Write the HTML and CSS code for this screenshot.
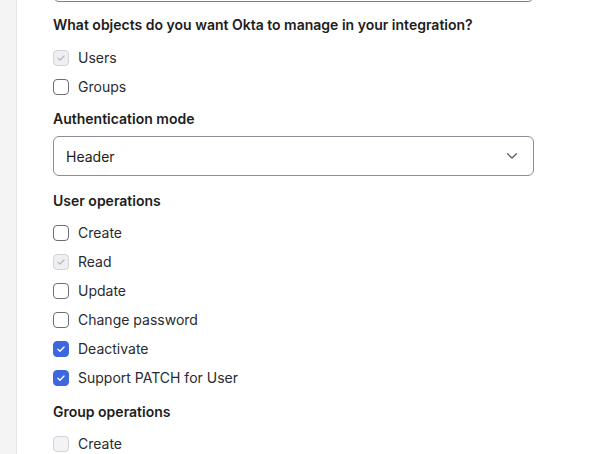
FILE: index.html
```html
<!DOCTYPE html>
<html>
<head>
<meta charset="utf-8">
<link rel="stylesheet" href="styles.css">
</head>
<body>
<div class="page">
  <aside class="side"></aside>
  <main class="content">
    <div class="prev-input"></div>

    <section class="section section-first">
      <h3 class="heading">What objects do you want Okta to manage in your integration?</h3>
      <label class="row"><span class="box box-disabled-checked"><svg viewBox="0 0 16 16"><path d="M4.5 8.2l2.3 2.3 4.7-4.8"/></svg></span>Users</label>
      <label class="row"><span class="box"></span>Groups</label>
    </section>

    <section class="section section-select">
      <h3 class="heading">Authentication mode</h3>
      <div class="select">
        <span>Header</span>
        <svg class="chevron" viewBox="0 0 12 8"><path d="M1.5 1.8l4.5 4.2 4.5-4.2"/></svg>
      </div>
    </section>

    <section class="section">
      <h3 class="heading">User operations</h3>
      <label class="row"><span class="box"></span>Create</label>
      <label class="row"><span class="box box-disabled-checked"><svg viewBox="0 0 16 16"><path d="M4.5 8.2l2.3 2.3 4.7-4.8"/></svg></span>Read</label>
      <label class="row"><span class="box"></span>Update</label>
      <label class="row"><span class="box"></span>Change password</label>
      <label class="row"><span class="box box-checked"><svg viewBox="0 0 16 16"><path d="M4.5 8.2l2.3 2.3 4.7-4.8"/></svg></span>Deactivate</label>
      <label class="row"><span class="box box-checked"><svg viewBox="0 0 16 16"><path d="M4.5 8.2l2.3 2.3 4.7-4.8"/></svg></span>Support PATCH for User</label>
    </section>

    <section class="section section-last">
      <h3 class="heading">Group operations</h3>
      <label class="row"><span class="box box-disabled"></span>Create</label>
    </section>
  </main>
</div>
</body>
</html>
```

FILE: styles.css
```css
* { box-sizing: border-box; }
html, body { margin: 0; padding: 0; background: #ffffff; }
body {
  font-family: Inter, "Noto Sans", sans-serif;
  color: #1d1d21;
  width: 592px;
  height: 454px;
  overflow: hidden;
}
.page {
  display: flex;
  height: 454px;
}
.side {
  width: 17px;
  flex: none;
  background: #f4f4f4;
  border-right: 1px solid #e6e6e6;
}
.content {
  flex: none;
  width: 517px;
  padding-left: 36px;
  display: flex;
  flex-direction: column;
}
.prev-input {
  flex: none;
  height: 12px;
  margin-top: -10px;
  border: 1px solid #7e7e88;
  border-radius: 6px;
}
.section {
  display: flex;
  flex-direction: column;
  margin-top: 8px;
}
.section-first { margin-top: 13px; }
.section-first .heading { margin-bottom: 8px; }
.section-last { margin-top: 10px; }
.heading {
  margin: 0 0 7px 0;
  font-size: 14px;
  line-height: 20px;
  font-weight: 600;
  color: #1d1d21;
}
.row {
  display: flex;
  align-items: center;
  gap: 9px;
  height: 29px;
  font-size: 14px;
  line-height: 20px;
  color: #2a2b30;
}
.box {
  width: 16px;
  height: 16px;
  flex: none;
  border: 1px solid #6e6e78;
  border-radius: 4px;
  background: #ffffff;
  display: flex;
  align-items: center;
  justify-content: center;
}
.box svg { width: 16px; height: 16px; fill: none; stroke-width: 1.3; stroke-linecap: round; stroke-linejoin: round; }
.box-disabled-checked {
  background: #efeff1;
  border-color: #d2d2d8;
}
.box-disabled-checked svg { stroke: #b4b4bc; }
.box-disabled {
  background: #f3f3f5;
  border-color: #d2d2d8;
}
.box-checked {
  background: #3d68dd;
  border-color: #3d68dd;
}
.box-checked svg { stroke: #ffffff; stroke-width: 1.5; }
.section-select .heading { margin-bottom: 7px; }
.section-select { margin-bottom: 7px; }
.select {
  height: 40px;
  border: 1px solid #8c8c96;
  border-radius: 6px;
  display: flex;
  align-items: center;
  justify-content: space-between;
  padding: 0 15px 0 12px;
  font-size: 14px;
  color: #1d1d21;
}
.chevron {
  width: 12px;
  height: 8px;
  fill: none;
  stroke: #5c5c66;
  stroke-width: 1.3;
  stroke-linecap: round;
  stroke-linejoin: round;
}
```
